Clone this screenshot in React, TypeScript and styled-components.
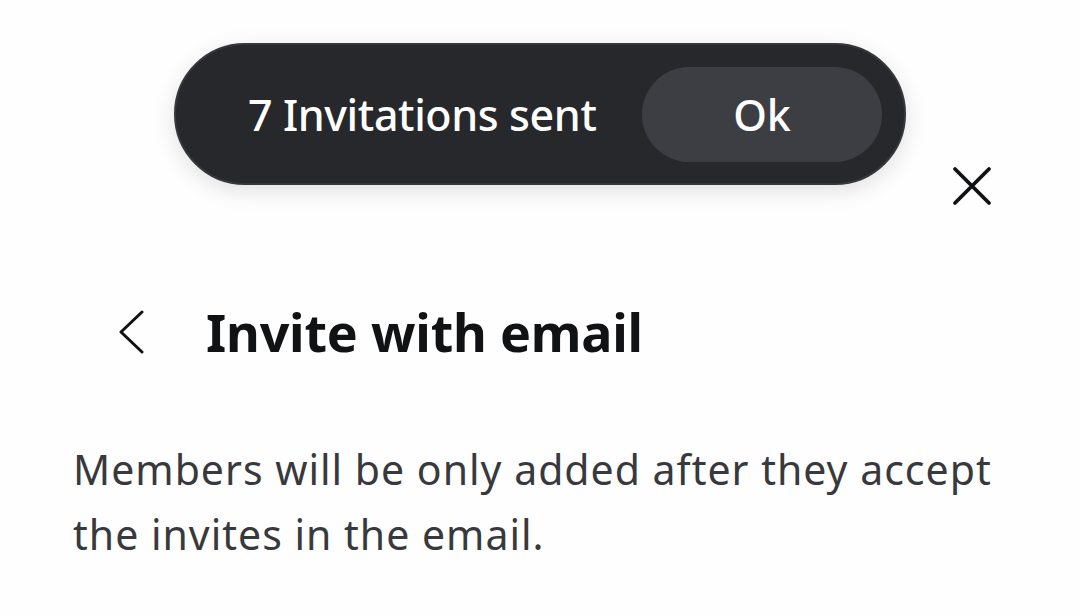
import { createGlobalStyle } from "styled-components"
import styled from "styled-components"

const GlobalStyle = createGlobalStyle`
   html, body {
      margin: 0;
      padding: 0;
      background: #ffffff;
   }
   body {
      font-family: "Noto Sans", "Liberation Sans", sans-serif;
      -webkit-font-smoothing: antialiased;
   }
`

const Sheet = styled.div`
   position: relative;
   width: 1080px;
   height: 616px;
   box-sizing: border-box;
   padding: 0 73px;
   background: #fefefe;
   overflow: hidden;
`

const Toast = styled.div`
   position: absolute;
   top: 43px;
   left: 50%;
   transform: translateX(-50%);
   width: 732px;
   height: 142px;
   box-sizing: border-box;
   display: flex;
   align-items: center;
   justify-content: space-between;
   padding: 0 22px 0 72px;
   border-radius: 71px;
   background: #27282c;
   border: 2px solid #36373b;
   box-shadow: 0 6px 22px rgba(0, 0, 0, 0.12);
   z-index: 2;
`

const ToastText = styled.span`
   color: #ffffff;
   font-size: 43px;
   font-weight: 500;
   letter-spacing: -0.4px;
`

const OkButton = styled.button`
   width: 240px;
   height: 95px;
   border: none;
   border-radius: 48px;
   background: #3d3e43;
   color: #ffffff;
   font-family: inherit;
   font-size: 43px;
   font-weight: 500;
   cursor: pointer;
`

const TopBar = styled.div`
   display: flex;
   justify-content: flex-end;
   padding-top: 166px;
   margin-right: 15px;
`

const IconButton = styled.button`
   display: flex;
   align-items: center;
   justify-content: center;
   padding: 0;
   border: none;
   background: none;
   cursor: pointer;
`

const Header = styled.div`
   display: flex;
   align-items: center;
   gap: 62px;
   margin-top: 90px;
   padding-left: 45px;
`

const Title = styled.h1`
   margin: 0;
   color: #111214;
   font-size: 52px;
   font-weight: 700;
   letter-spacing: -0.2px;
`

const Note = styled.p`
   margin: 70px 0 0;
   color: #38393d;
   font-size: 41px;
   line-height: 65px;
   font-weight: 400;
   letter-spacing: 1px;
   max-width: 940px;
`

export default function App() {
   return (
      <>
         <GlobalStyle />
         <Sheet>
            <Toast role="status">
               <ToastText>7 Invitations sent</ToastText>
               <OkButton>Ok</OkButton>
            </Toast>
            <TopBar>
               <IconButton aria-label="Close">
                  <svg width="40" height="40" viewBox="0 0 40 40" fill="none">
                     <path d="M3 3 L37 37 M37 3 L3 37" stroke="#111214" strokeWidth="3.8" strokeLinecap="round" />
                  </svg>
               </IconButton>
            </TopBar>
            <Header>
               <IconButton aria-label="Back">
                  <svg width="26" height="44" viewBox="0 0 26 44" fill="none">
                     <path d="M24 2 L3 22 L24 42" stroke="#111214" strokeWidth="3" strokeLinecap="round" strokeLinejoin="round" />
                  </svg>
               </IconButton>
               <Title>Invite with email</Title>
            </Header>
            <Note>Members will be only added after they accept the invites in the email.</Note>
         </Sheet>
      </>
   )
}
